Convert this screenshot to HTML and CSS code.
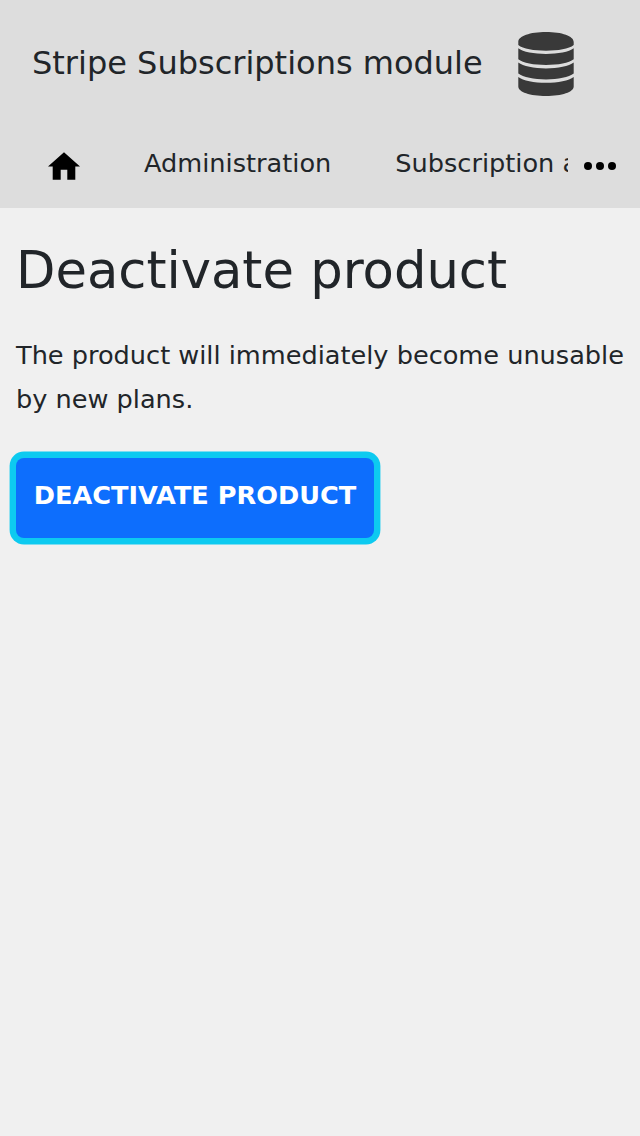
FILE: index.html
```html
<!DOCTYPE html>
<html lang="en">
<head>
<meta charset="utf-8">
<title>Deactivate product</title>
<link rel="stylesheet" href="styles.css">
</head>
<body>
<header class="header">
  <div class="brand">
    <span class="brand-name">Stripe Subscriptions module</span>
    <svg class="brand-icon" viewBox="0 0 56 64" fill="#393939"><path d="M.3 10C.3 4 12 0 28 0s27.700 4 27.700 10v3C51 17 40 18.700 28 18.700S5 17 .3 13zM.3 16.300C5 20 16 21.900 28 21.900s23-1.900 27.700-5.600v11C51 31 40 33 28 33S5 31 .3 27.300zM.3 30.600C5 34.300 16 36.400 28 36.400s23-2.100 27.700-5.800v11C51 45.300 40 47.400 28 47.400S5 45.300 .3 41.600zM.3 44.900C5 48.600 16 50.700 28 50.700s23-2.100 27.700-5.800v9.600C55.700 60 44 64 28 64S.3 60 .3 54.500z"/></svg>
  </div>
  <nav class="nav">
    <a class="home"><svg viewBox="0 0 32 28"><path d="M16 .3 0 14.500h4.700V27.700h8V17.800h6.600v9.900h8V14.500H32z"/></svg></a>
    <div class="links"><a>Administration</a><a>Subscription administration</a></div>
    <svg class="more" viewBox="0 0 32 8"><circle cx="4" cy="4" r="4"/><circle cx="16" cy="4" r="4"/><circle cx="28" cy="4" r="4"/></svg>
  </nav>
</header>
<main class="content">
  <h1>Deactivate product</h1>
  <p>The product will immediately become unusable by new plans.</p>
  <button class="submit">DEACTIVATE PRODUCT</button>
</main>
</body>
</html>
```
FILE: styles.css
```css
* { box-sizing: border-box; }
body { margin: 0; background: #f0f0f0; color: #212529; font-family: "DejaVu Sans", sans-serif; font-size: 25.6px; }
.header { height: 208px; background: #ddd; }
.brand { display: flex; align-items: center; height: 128px; padding-left: 32px; font-size: 32px; white-space: nowrap; }
.brand-name { width: 486px; padding-bottom: 2px; }
.brand-icon { width: 56px; height: 64px; }
.nav { display: flex; height: 80px; }
.home { width: 64px; margin-left: 32px; padding: 24px 16px; }
.home svg { display: block; width: 32px; height: 28px; }
.links { display: flex; width: 456px; margin-left: 16px; gap: 64px; padding-left: 32px; line-height: 70px; overflow: hidden; white-space: nowrap; }
.more { width: 32px; height: 8px; margin: 34px 0 0 16px; }
.content { padding: 31px 16px; }
h1 { margin: 0; font-size: 51.2px; font-weight: 400; line-height: 62px; }
p { margin: 32px 0 37px; line-height: 44px; }
.submit { display: block; width: 358px; height: 80px; padding: 0 0 6px; border: 0; border-radius: 8px; background: #0d6efd; color: #fff; font: bold 25.6px "DejaVu Sans", sans-serif; box-shadow: 0 0 0 6.4px #0dcaf0; }
```
